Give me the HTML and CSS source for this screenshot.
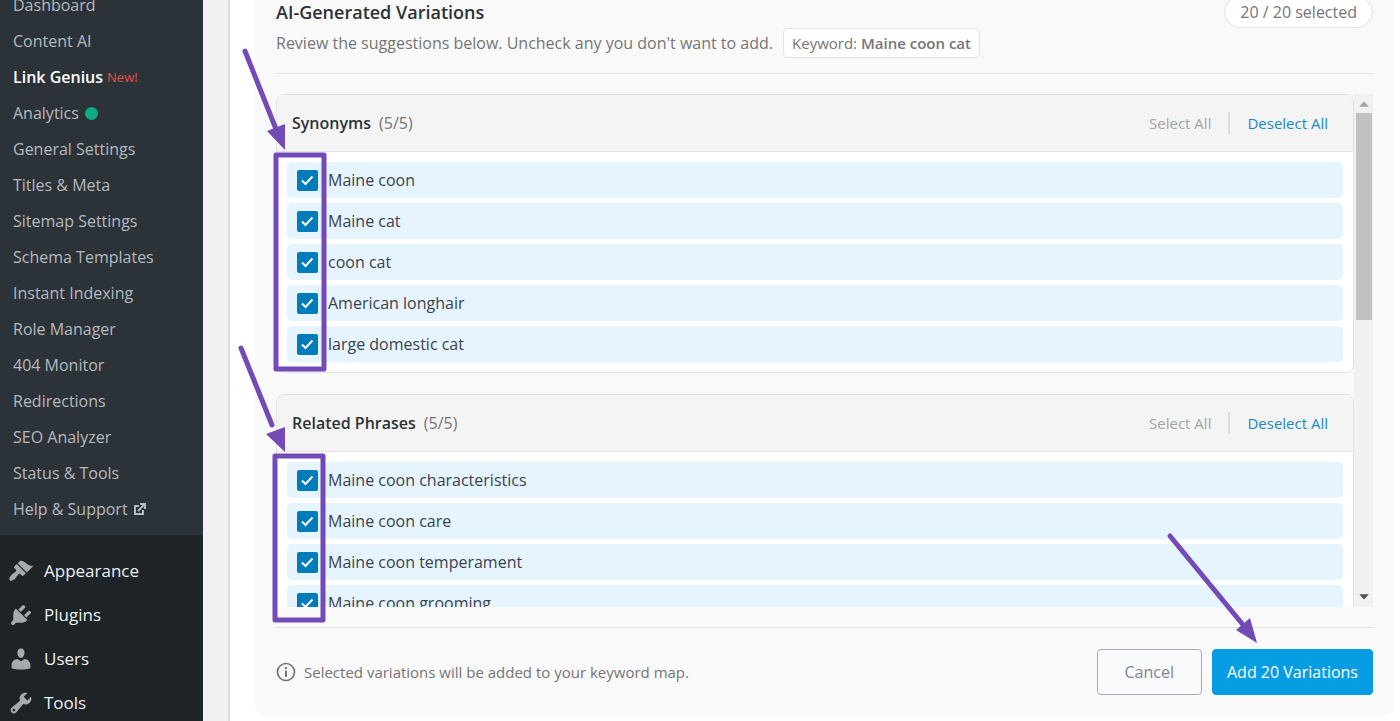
FILE: index.html
```html
<!DOCTYPE html>
<html lang="en">
<head>
    <meta charset="utf-8">
    <title>Link Genius</title>
    <link rel="stylesheet" href="styles.css">
</head>
<body>
    <div class="wrap">
        <!-- admin menu -->
        <nav class="sidebar">
            <ul class="submenu">
                <li><a href="#">Dashboard</a></li>
                <li><a href="#">Content AI</a></li>
                <li><a href="#" class="current">Link Genius <span class="new">New!</span></a></li>
                <li><a href="#">Analytics <span class="dot"></span></a></li>
                <li><a href="#">General Settings</a></li>
                <li><a href="#">Titles &amp; Meta</a></li>
                <li><a href="#">Sitemap Settings</a></li>
                <li><a href="#">Schema Templates</a></li>
                <li><a href="#">Instant Indexing</a></li>
                <li><a href="#">Role Manager</a></li>
                <li><a href="#">404 Monitor</a></li>
                <li><a href="#">Redirections</a></li>
                <li><a href="#">SEO Analyzer</a></li>
                <li><a href="#">Status &amp; Tools</a></li>
                <li>
                    <a href="#">Help &amp; Support
                        <svg class="ext" viewBox="0 0 12 12" fill="none" stroke="currentColor" stroke-width="2">
                            <path d="M5 3H1v8h8V7M4 8l6-6M6 1h5v5" />
                        </svg>
                    </a>
                </li>
            </ul>
            <ul class="menu">
                <li>
                    <a href="#">
                        <svg viewBox="0 0 20 20"><path d="M14.48 11.06 7.41 3.99l1.5-1.5c.5-.56 2.3-.47 3.51.32 1.21.8 1.43 1.28 2.91 2.1 1.18.64 2.45 1.26 4.45.85zm-.71.71L6.7 4.7 4.93 6.47c-.39.39-.39 1.02 0 1.41l1.06 1.06c.39.39.39 1.03 0 1.42-.6.6-1.43 1.11-2.21 1.69-.35.26-.7.53-1.01.84C1.43 14.23.4 16.08 1.4 17.07c.99 1 2.84-.03 4.18-1.36.31-.31.58-.66.85-1.02.57-.78 1.08-1.61 1.69-2.21.39-.39 1.02-.39 1.41 0l1.06 1.06c.39.39 1.02.39 1.41 0z" /></svg>
                        Appearance
                    </a>
                </li>
                <li>
                    <a href="#">
                        <svg viewBox="0 0 20 20"><path d="M13.11 4.36 9.87 7.6 8 5.73l3.24-3.24c.35-.34 1.05-.2 1.56.32.52.51.66 1.21.31 1.55zm-8 1.77.91-1.12 9.01 9.01-1.19.84c-.71.71-2.63 1.16-3.82 1.16H6.14L4.9 17.26c-.59.59-1.54.59-2.12 0-.59-.58-.59-1.53 0-2.12l1.24-1.24v-3.88c0-1.13.4-3.19 1.09-3.89zm7.26 3.97 3.24-3.24c.34-.35 1.04-.21 1.55.31.52.51.66 1.21.31 1.55l-3.24 3.25z" /></svg>
                        Plugins
                    </a>
                </li>
                <li>
                    <a href="#">
                        <svg viewBox="0 0 20 20"><path d="M10 9.25c-2.27 0-2.73-3.44-2.73-3.44C7 4.02 7.82 2 9.97 2c2.16 0 2.98 2.02 2.71 3.81 0 0-.41 3.44-2.68 3.44zm0 2.57L12.72 10c2.39 0 4.52 2.33 4.52 4.53v2.49s-3.65 1.13-7.24 1.13c-3.65 0-7.24-1.13-7.24-1.13v-2.49c0-2.25 1.94-4.48 4.47-4.48z" /></svg>
                        Users
                    </a>
                </li>
                <li>
                    <a href="#">
                        <svg viewBox="0 0 20 20"><path d="M16.68 9.77c-1.34 1.34-3.3 1.67-4.95.99l-5.41 6.52c-.99.99-2.59.99-3.58 0s-.99-2.59 0-3.57l6.52-5.42c-.68-1.65-.35-3.61.99-4.95 1.28-1.28 3.12-1.62 4.72-1.06l-2.89 2.89 2.82 2.82 2.86-2.87c.53 1.58.18 3.39-1.08 4.65zM3.81 16.21c.4.39 1.04.39 1.43 0 .4-.4.4-1.04 0-1.43-.39-.4-1.03-.4-1.43 0-.39.39-.39 1.03 0 1.43z" /></svg>
                        Tools
                    </a>
                </li>
            </ul>
        </nav>

        <main class="content">
            <section class="panel">
                <header class="panel-head">
                    <div>
                        <h2>AI-Generated Variations</h2>
                        <div class="sub">
                            <p>Review the suggestions below. Uncheck any you don't want to add.</p>
                            <span class="keyword">Keyword: <b>Maine coon cat</b></span>
                        </div>
                    </div>
                    <span class="count">20 / 20 selected</span>
                </header>

                <div class="scroller">
                    <div class="groups">
                        <div class="group">
                            <div class="group-head">
                                <h3>Synonyms</h3>
                                <span class="num">(5/5)</span>
                                <div class="actions">
                                    <button type="button" disabled>Select All</button>
                                    <button type="button">Deselect All</button>
                                </div>
                            </div>
                            <div class="rows">
                                <label><input type="checkbox" checked>Maine coon</label>
                                <label><input type="checkbox" checked>Maine cat</label>
                                <label><input type="checkbox" checked>coon cat</label>
                                <label><input type="checkbox" checked>American longhair</label>
                                <label><input type="checkbox" checked>large domestic cat</label>
                            </div>
                        </div>
                        <div class="group">
                            <div class="group-head">
                                <h3>Related Phrases</h3>
                                <span class="num">(5/5)</span>
                                <div class="actions">
                                    <button type="button" disabled>Select All</button>
                                    <button type="button">Deselect All</button>
                                </div>
                            </div>
                            <div class="rows">
                                <label><input type="checkbox" checked>Maine coon characteristics</label>
                                <label><input type="checkbox" checked>Maine coon care</label>
                                <label><input type="checkbox" checked>Maine coon temperament</label>
                                <label><input type="checkbox" checked>Maine coon grooming</label>
                            </div>
                        </div>
                    </div>
                    <div class="bar">
                        <svg class="up" viewBox="0 0 18 18"><path d="M5 12h9L9.500 7z" /></svg>
                        <div class="thumb"></div>
                        <svg class="down" viewBox="0 0 18 18"><path d="M5 6h9l-4.500 5z" /></svg>
                    </div>
                </div>

                <footer class="panel-foot">
                    <svg class="info" viewBox="0 0 20 20">
                        <circle cx="10" cy="10" r="8.500" fill="none" stroke="currentColor" stroke-width="1.700" />
                        <path d="M9 5h2v2H9zM9 8.500h2V15H9z" fill="currentColor" />
                    </svg>
                    <p>Selected variations will be added to your keyword map.</p>
                    <button type="button" class="btn cancel">Cancel</button>
                    <button type="button" class="btn add">Add 20 Variations</button>
                </footer>

                <!-- callouts -->
                <svg class="mark mark-left" width="100" height="640" viewBox="0 0 100 640">
                    <g fill="none" stroke="#724bb7" stroke-width="5" stroke-linecap="round" stroke-linejoin="round">
                        <path d="M10 51l31 78M6 348l31 77" />
                        <rect x="41" y="155" width="48" height="214" />
                        <rect x="40" y="456" width="48" height="164" />
                    </g>
                    <path d="M32 131l18-7v26zM31 434l19-7v25z" fill="#724bb7" />
                </svg>
                <svg class="mark mark-right" width="100" height="120" viewBox="0 0 100 120">
                    <path d="M10 12l74 90" fill="none" stroke="#724bb7" stroke-width="5" stroke-linecap="round" />
                    <path d="M76 106l14-12 7 25z" fill="#724bb7" />
                </svg>
            </section>
        </main>
    </div>
</body>
</html>
```
FILE: styles.css
```css
* {
    box-sizing: border-box;
    margin: 0;
    padding: 0;
}
body {
    background: #f0f0f1;
    color: #3c434a;
    font: 16px/22px "Open Sans", "Noto Sans", sans-serif;
}
ul {
    list-style: none;
}
a {
    text-decoration: none;
}
button {
    font: inherit;
    cursor: pointer;
}

.wrap {
    display: flex;
    height: 100vh;
    overflow: hidden;
}

/* sidebar */
.sidebar {
    flex: none;
    width: 203px;
    background: #1d2327;
}
.submenu {
    margin-top: -13px;
    padding-bottom: 8px;
    background: #2c3338;
}
.submenu a {
    display: flex;
    align-items: center;
    gap: 6px;
    height: 36px;
    padding-left: 13px;
    color: #b4b9be;
}
.submenu .current {
    gap: 4px;
    color: #fff;
    font-weight: 600;
}
.new {
    color: #e2504c;
    font-size: 13px;
    font-weight: 400;
}
.dot {
    width: 13px;
    height: 13px;
    border-radius: 50%;
    background: #10ac84;
}
.ext {
    width: 12px;
    height: 12px;
}
.menu {
    padding-top: 14px;
}
.menu a {
    display: flex;
    align-items: center;
    gap: 10px;
    height: 44px;
    padding-left: 8px;
    color: #f0f0f1;
    font-size: 17px;
}
.menu svg {
    width: 26px;
    height: 26px;
    fill: #a7aaad;
}

/* panel */
.content {
    flex: 1;
    margin-left: 25px;
    padding: 0 6px 0 25px;
    border-left: 2px solid #dcdcde;
    background: #fff;
}
.panel {
    position: relative;
    padding: 0 21px 21px;
    border-radius: 0 0 10px 10px;
    background: #f9f9f9;
}
.panel-head {
    display: flex;
    justify-content: space-between;
    align-items: flex-start;
    padding-bottom: 15px;
    border-bottom: 1px solid #e2e2e2;
    color: #757575;
}
.panel-head h2 {
    margin-bottom: 4px;
    color: #2c3338;
    font-size: 18px;
    line-height: 24px;
    font-weight: 600;
}
.sub {
    display: flex;
    align-items: center;
    gap: 10px;
}
.keyword {
    padding: 3px 8px;
    border: 1px solid #e2e2e2;
    border-radius: 5px;
    background: #fff;
    font-size: 15px;
}
.keyword b {
    font-weight: 600;
}
.count {
    margin-top: -4px;
    padding: 4px 15px;
    border: 1px solid #e2e2e2;
    border-radius: 16px;
    background: #fff;
}

/* list */
.scroller {
    display: flex;
    height: 513px;
    margin: 20px 0;
}
.groups {
    flex: 1;
    overflow: hidden;
}
.group {
    margin-bottom: 21px;
    border: 1px solid #e2e2e2;
    border-radius: 8px;
    background: #fff;
    overflow: hidden;
}
.group-head {
    display: flex;
    align-items: center;
    gap: 8px;
    height: 57px;
    padding: 0 25px 0 15px;
    border-bottom: 1px solid #e2e2e2;
    background: #f4f4f4;
}
.group-head h3 {
    color: #2c3338;
    font-size: 16px;
    font-weight: 600;
}
.num {
    color: #757575;
}
.actions {
    display: flex;
    margin-left: auto;
    font-size: 15px;
}
.actions button {
    padding-left: 17px;
    border: 0;
    background: none;
    color: #1c88c4;
}
.actions button:disabled {
    padding: 0 17px 0 0;
    border-right: 2px solid #dedede;
    color: #a5a5a5;
    cursor: default;
}
.rows {
    display: grid;
    gap: 5px;
    padding: 10px;
}
.rows label {
    display: flex;
    align-items: center;
    gap: 10px;
    height: 36px;
    padding-left: 10px;
    border-radius: 5px;
    background: #e5f4fe;
}
.rows input {
    appearance: none;
    width: 21px;
    height: 21px;
    border-radius: 2px;
    background: #007cba url("data:image/svg+xml,%3Csvg xmlns='http://www.w3.org/2000/svg' viewBox='0 0 21 21'%3E%3Cpath d='M5 10.500l3.500 3.500 7-7.500' fill='none' stroke='white' stroke-width='2'/%3E%3C/svg%3E");
}
.bar {
    display: flex;
    flex-direction: column;
    flex: none;
    width: 19px;
    background: #f1f1f1;
}
.bar svg {
    width: 19px;
    height: 19px;
}
.up {
    fill: #a3a3a3;
}
.down {
    margin-top: auto;
    fill: #505050;
}
.thumb {
    height: 207px;
    margin: 0 1px 0 2px;
    background: #c1c1c1;
}

/* footer */
.panel-foot {
    display: flex;
    align-items: center;
    padding-top: 21px;
    border-top: 1px solid #e6e6e6;
    color: #757575;
    font-size: 15px;
}
.info {
    width: 20px;
    height: 20px;
    margin-right: 8px;
}
.btn {
    height: 46px;
    padding: 0 14px;
    border: 1px solid #069de3;
    border-radius: 4px;
    background: #069de3;
    color: #fff;
    font-size: 16px;
}
.cancel {
    margin: 0 10px 0 auto;
    padding: 0 27px;
    border-color: #a7aaad;
    background: #f9fafc;
    color: #7e8490;
}

.mark {
    position: absolute;
    pointer-events: none;
}
.mark-left {
    top: 0;
    left: -20px;
}
.mark-right {
    right: 134px;
    bottom: 72px;
}
```
